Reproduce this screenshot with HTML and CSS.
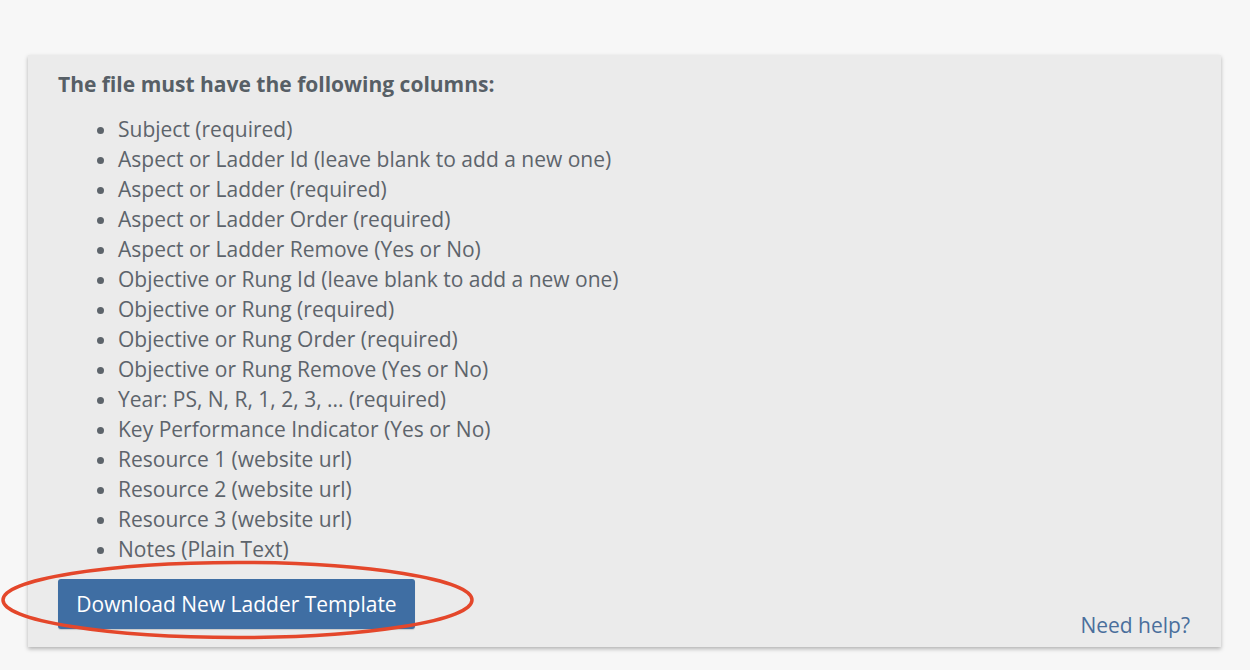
FILE: index.html
```html
<!DOCTYPE html>
<html>
<head>
<meta charset="utf-8">
<link rel="stylesheet" href="styles.css">
</head>
<body>
<div class="page">
  <div class="panel">
    <h2 class="title">The file must have the following columns:</h2>
    <ul class="cols">
      <li>Subject (required)</li>
      <li>Aspect or Ladder Id (leave blank to add a new one)</li>
      <li>Aspect or Ladder (required)</li>
      <li>Aspect or Ladder Order (required)</li>
      <li>Aspect or Ladder Remove (Yes or No)</li>
      <li>Objective or Rung Id (leave blank to add a new one)</li>
      <li>Objective or Rung (required)</li>
      <li>Objective or Rung Order (required)</li>
      <li>Objective or Rung Remove (Yes or No)</li>
      <li>Year: PS, N, R, 1, 2, 3, ... (required)</li>
      <li>Key Performance Indicator (Yes or No)</li>
      <li>Resource 1 (website url)</li>
      <li>Resource 2 (website url)</li>
      <li>Resource 3 (website url)</li>
      <li>Notes (Plain Text)</li>
    </ul>
    <div class="footer">
      <button class="btn">Download New Ladder Template</button>
      <a class="help" href="#">Need help?</a>
    </div>
  </div>
  <svg class="annot" width="1250" height="670" viewBox="0 0 1250 670">
    <ellipse cx="237.5" cy="600" rx="234.5" ry="37.5" fill="none" stroke="#e4472b" stroke-width="3.5"/>
  </svg>
</div>
</body>
</html>
```

FILE: styles.css
```css
html, body {
  margin: 0;
  padding: 0;
  background: #f7f7f7;
}
.page {
  width: 1250px;
  height: 670px;
  padding-top: 55px;
  padding-left: 28px;
  box-sizing: border-box;
  font-family: "Open Sans", "DejaVu Sans", sans-serif;
}
.panel {
  width: 1193px;
  height: 592px;
  box-sizing: border-box;
  background: #ebebeb;
  box-shadow: 0 2px 4px rgba(0,0,0,0.28);
  padding: 14px 31px 18px 30px;
  display: flex;
  flex-direction: column;
}
.title {
  margin: 0;
  font-size: 21px;
  line-height: 30px;
  font-weight: 700;
  color: #575f66;
}
.cols {
  margin: 15px 0 0 0;
  padding-left: 60px;
  list-style: disc;
  color: #5d646b;
  font-size: 21px;
  line-height: 30px;
}
.footer {
  margin-top: 15px;
  display: flex;
  justify-content: space-between;
  align-items: flex-end;
}
.btn {
  height: 50px;
  width: 357px;
  border: none;
  border-radius: 3px;
  background: #3f6ea3;
  color: #ffffff;
  font-family: "Open Sans", "DejaVu Sans", sans-serif;
  font-size: 21px;
  padding: 0;
  box-shadow: 0 1px 1px rgba(0,0,0,0.15);
}
.help {
  color: #4a6f9c;
  text-decoration: none;
  font-size: 21px;
  line-height: 30px;
  margin-bottom: -11px;
}
.annot {
  position: absolute;
  left: 0;
  top: 0;
  pointer-events: none;
}
```
